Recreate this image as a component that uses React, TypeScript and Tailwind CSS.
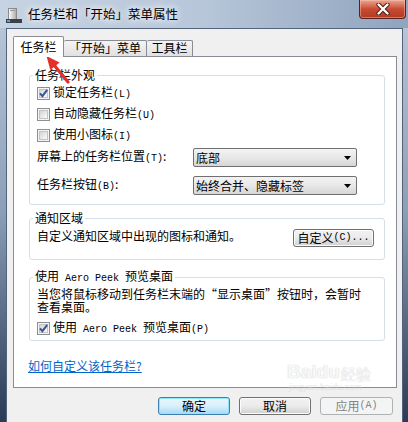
import type { ReactNode } from 'react';

const M = ({ children }: { children: ReactNode }) => (
  <span className="font-['Liberation_Mono',monospace] text-[10px]">{children}</span>
);

function CheckBox({ checked }: { checked?: boolean }) {
  return (
    <span className="relative w-[13px] h-[13px] shrink-0 border border-[#8e8f8f] bg-[#f4f4f4] flex items-center justify-center">
      <span className="w-[9px] h-[9px] border border-[#c4c4c4] bg-gradient-to-br from-[#d4d4d4] to-[#fbfbfb]" />
      {checked && (
        <svg className="absolute inset-0" width="11" height="11" viewBox="0 0 11 11">
          <path d="M2 5.3 L4.4 8.2 L9.2 1.8" fill="none" stroke="#3a5595" strokeWidth="2" />
        </svg>
      )}
    </span>
  );
}

function Select({ value }: { value: string }) {
  return (
    <div className="w-[164px] h-[19px] border border-[#707070] rounded-[2px] bg-gradient-to-b from-[#f3f3f3] via-[#e8e8e8] to-[#d6d6d6] flex items-center justify-between pl-[2px] pr-[5px]">
      <span className="leading-[14px]">{value}</span>
      <svg width="7" height="4" viewBox="0 0 7 4">
        <path d="M0 0 H7 L3.5 4 Z" fill="#000" />
      </svg>
    </div>
  );
}

function Button({ children, kind = 'normal', w }: { children: ReactNode; kind?: 'normal' | 'default' | 'disabled'; w: string }) {
  const look =
    kind === 'default'
      ? 'border-[#3c7fb1] bg-gradient-to-b from-[#eaf6fd] via-[#d9f0fc] to-[#a7d9f5] shadow-[inset_0_0_0_1px_#8ee6fb]'
      : kind === 'disabled'
        ? 'border-[#adb2b5] bg-[#f4f4f4] text-[#838383]'
        : 'border-[#707070] bg-gradient-to-b from-[#f2f2f2] via-[#ebebeb] to-[#cfcfcf] shadow-[inset_0_0_0_1px_#fcfcfc]';
  return (
    <div className={`${w} h-[18px] border rounded-[3px] flex items-center justify-center leading-[14px] ${look}`}>
      {children}
    </div>
  );
}

export default function App() {
  return (
    <div className="relative w-[408px] h-[422px] overflow-hidden flex flex-col bg-gradient-to-b from-[#bccadb] via-[#8c9fb8] to-[#2b3b57] font-['Noto_Sans_CJK_SC',sans-serif] text-[12px] text-black">
      {/* Title bar */}
      <div className="h-[28px] shrink-0 flex items-start bg-gradient-to-r from-[#c6d3e2] via-[#b7c6d9] to-[#8fa4be]">
        <svg className="ml-[6px] mt-[8px]" width="16" height="16" viewBox="0 0 16 16">
          <defs>
            <linearGradient id="tw" x1="0" y1="0" x2="1" y2="0">
              <stop offset="0" stopColor="#ffffff" />
              <stop offset="1" stopColor="#a9a9a9" />
            </linearGradient>
          </defs>
          <rect x="2.5" y="0.5" width="8" height="11" fill="url(#tw)" stroke="#8a8a8a" />
          <rect x="4" y="2" width="5" height="1" fill="#9a9a9a" />
          <rect x="0" y="11" width="16" height="4" fill="#3b3f46" />
          <rect x="1" y="12" width="2" height="2" fill="#4aa0e0" />
          <rect x="3" y="12" width="1" height="2" fill="#7cc24a" />
        </svg>
        <span className="ml-[6px] mt-[6px] text-[12.5px] leading-[16px] [text-shadow:0_0_6px_#fff,0_0_10px_#fff]">
          任务栏和「开始」菜单属性
        </span>
        <div className="ml-auto mr-[2px] w-[47px] h-[19px] rounded-b-[4px] border border-t-0 border-[#5e2016] bg-gradient-to-b from-[#e9a794] via-[#c94a32] to-[#b03a24] shadow-[inset_0_0_0_1px_rgba(255,200,180,0.45)] flex items-center justify-center">
          <svg width="14" height="12" viewBox="0 0 14 12">
            <path d="M2.5 1.5 L11.5 10.5 M11.5 1.5 L2.5 10.5" stroke="#4a1a12" strokeWidth="4.2" strokeLinecap="round" />
            <path d="M2.5 1.5 L11.5 10.5 M11.5 1.5 L2.5 10.5" stroke="#ffffff" strokeWidth="2.4" strokeLinecap="round" />
          </svg>
        </div>
      </div>

      {/* Client area */}
      <div className="flex-1 ml-[6px] mr-[5px] border border-b-0 border-[#52637a] bg-[#f0f0f0] flex flex-col pt-[7px] pl-[6px] pr-[5px]">
        {/* Tabs */}
        <div className="flex items-end">
          <div className="relative z-10 -mb-px w-[51px] h-[21px] bg-white border border-b-0 border-[#898c95] rounded-t-[2px] flex justify-center pt-[3px] leading-[14px]">
            任务栏
          </div>
          <div className="w-[83px] h-[16px] border border-l-0 border-b-0 border-[#898c95] rounded-t-[2px] bg-gradient-to-b from-[#f4f4f4] to-[#e1e1e1] flex justify-center leading-[14px]">
            「开始」菜单
          </div>
          <div className="w-[46px] h-[16px] border border-l-0 border-b-0 border-[#898c95] rounded-t-[2px] bg-gradient-to-b from-[#f4f4f4] to-[#e1e1e1] flex justify-center leading-[14px]">
            工具栏
          </div>
        </div>

        {/* Tab panel */}
        <div className="h-[332px] border border-[#898c95] bg-white flex flex-col">
          <fieldset className="ml-[15px] mt-[11px] w-[356px] border border-[#d5dfe5] rounded-[3px] px-[5px] pb-[9px]">
            <legend className="px-[2px] ml-[-2px] leading-[14px]">任务栏外观</legend>
            <div className="pl-[2px] mt-[1px] flex flex-col">
              <div className="h-[21px] flex items-center gap-[3px]">
                <CheckBox checked />
                <span className="leading-[14px]">锁定任务栏<M>(L)</M></span>
              </div>
              <div className="h-[21px] flex items-center gap-[3px]">
                <CheckBox />
                <span className="leading-[14px]">自动隐藏任务栏<M>(U)</M></span>
              </div>
              <div className="h-[21px] flex items-center gap-[3px]">
                <CheckBox />
                <span className="leading-[14px]">使用小图标<M>(I)</M></span>
              </div>
              <div className="mt-[2px] flex items-center">
                <span className="w-[156px] leading-[14px]">屏幕上的任务栏位置<M>(T)</M>:</span>
                <Select value="底部" />
              </div>
              <div className="mt-[9px] flex items-center">
                <span className="w-[156px] leading-[14px]">任务栏按钮<M>(B)</M>:</span>
                <Select value="始终合并、隐藏标签" />
              </div>
            </div>
          </fieldset>

          <fieldset className="ml-[15px] mt-[6px] w-[356px] border border-[#d5dfe5] rounded-[3px] px-[5px] pb-[12px]">
            <legend className="px-[2px] ml-[-2px] leading-[14px]">通知区域</legend>
            <div className="pl-[2px] mt-[4px] flex items-start justify-between">
              <span className="mt-[1px] leading-[12px]">自定义通知区域中出现的图标和通知。</span>
              <Button w="w-[81px] mr-[5px]">
                自定义<M>(C)...</M>
              </Button>
            </div>
          </fieldset>

          <fieldset className="ml-[15px] mt-[9px] w-[356px] border border-[#d5dfe5] rounded-[3px] px-[5px] pb-[2px]">
            <legend className="px-[2px] ml-[-2px] leading-[14px]">
              使用<M> Aero Peek </M>预览桌面
            </legend>
            <div className="pl-[2px] flex flex-col">
              <p className="mt-[1px] leading-[13px]">
                当您将鼠标移动到任务栏末端的“显示桌面”按钮时，会暂时
                <br />
                查看桌面。
              </p>
              <div className="mt-[5px] h-[20px] flex items-center gap-[3px]">
                <CheckBox checked />
                <span className="leading-[14px]">
                  使用<M> Aero Peek </M>预览桌面<M>(P)</M>
                </span>
              </div>
            </div>
          </fieldset>

          <a className="ml-[14px] mt-[19px] self-start leading-[12px] text-[#0066cc] underline">如何自定义该任务栏?</a>
        </div>

        {/* Dialog buttons */}
        <div className="mt-[9px] flex justify-end gap-[9px] pr-[4px]">
          <Button kind="default" w="w-[72px]">确定</Button>
          <Button w="w-[72px]">取消</Button>
          <Button kind="disabled" w="w-[73px]">
            应用<M>(A)</M>
          </Button>
        </div>
      </div>

      {/* Baidu watermark */}
      <div className="absolute left-[287px] top-[362px] pointer-events-none opacity-60 flex flex-col items-start">
        <div className="flex items-end leading-none">
          <span className="font-['Liberation_Sans',sans-serif] font-bold text-[19px] text-[#f3f3f3] [text-shadow:0_0_1px_#bdbdbd,0_0_1px_#bdbdbd]">Bai</span>
          <span className="font-['Liberation_Sans',sans-serif] font-bold text-[19px] text-[#f3f3f3] [text-shadow:0_0_1px_#bdbdbd,0_0_1px_#bdbdbd]">du</span>
          <span className="ml-[1px] text-[15px] text-[#f3f3f3] [text-shadow:0_0_1px_#bdbdbd,0_0_1px_#bdbdbd]">经验</span>
        </div>
        <span className="mt-[2px] ml-[2px] font-['Liberation_Sans',sans-serif] text-[9px] leading-none text-[#d8d8d8]">jingyan.baidu.com</span>
      </div>

      {/* Red annotation arrow */}
      <svg className="absolute left-0 top-0 pointer-events-none" width="408" height="422" viewBox="0 0 408 422">
        <path d="M68 82 L54 65" stroke="#e3302a" strokeWidth="3.2" strokeLinecap="round" />
        <path d="M46.5 56 L50.3 70 L59.6 62.4 Z" fill="#e3302a" />
      </svg>
    </div>
  );
}
